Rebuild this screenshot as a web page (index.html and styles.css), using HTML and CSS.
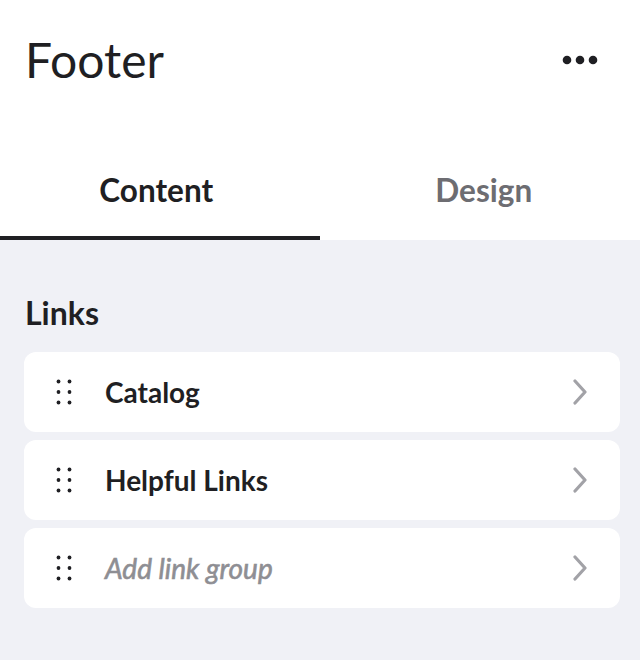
FILE: index.html
```html
<!DOCTYPE html>
<html>
<head>
<meta charset="utf-8">
<link rel="stylesheet" href="styles.css">
</head>
<body>
<div class="panel">
  <div class="header">
    <h1 class="title">Footer</h1>
    <button class="more" aria-label="More">
      <svg width="36" height="10" viewBox="0 0 36 10"><circle cx="5" cy="5" r="4.3" fill="#1f1f23"/><circle cx="18" cy="5" r="4.3" fill="#1f1f23"/><circle cx="31" cy="5" r="4.3" fill="#1f1f23"/></svg>
    </button>
  </div>
  <div class="tabs">
    <div class="tab tab-left active">Content</div>
    <div class="tab tab-right">Design</div>
  </div>
  <div class="content">
    <h2 class="section-title">Links</h2>
    <div class="list">
      <div class="item">
        <svg class="grip" width="16" height="26" viewBox="0 0 16 26"><circle cx="2.5" cy="2.5" r="1.9"/><circle cx="13.5" cy="2.5" r="1.9"/><circle cx="2.5" cy="13" r="1.9"/><circle cx="13.5" cy="13" r="1.9"/><circle cx="2.5" cy="23.5" r="1.9"/><circle cx="13.5" cy="23.5" r="1.9"/></svg>
        <span class="label">Catalog</span>
        <svg class="chev" width="16" height="26" viewBox="0 0 16 26"><path d="M3 2 L13 13 L3 24" fill="none" stroke="#a2a2a7" stroke-width="3.2" stroke-linecap="round" stroke-linejoin="round"/></svg>
      </div>
      <div class="item">
        <svg class="grip" width="16" height="26" viewBox="0 0 16 26"><circle cx="2.5" cy="2.5" r="1.9"/><circle cx="13.5" cy="2.5" r="1.9"/><circle cx="2.5" cy="13" r="1.9"/><circle cx="13.5" cy="13" r="1.9"/><circle cx="2.5" cy="23.5" r="1.9"/><circle cx="13.5" cy="23.5" r="1.9"/></svg>
        <span class="label">Helpful Links</span>
        <svg class="chev" width="16" height="26" viewBox="0 0 16 26"><path d="M3 2 L13 13 L3 24" fill="none" stroke="#a2a2a7" stroke-width="3.2" stroke-linecap="round" stroke-linejoin="round"/></svg>
      </div>
      <div class="item">
        <svg class="grip" width="16" height="26" viewBox="0 0 16 26"><circle cx="2.5" cy="2.5" r="1.9"/><circle cx="13.5" cy="2.5" r="1.9"/><circle cx="2.5" cy="13" r="1.9"/><circle cx="13.5" cy="13" r="1.9"/><circle cx="2.5" cy="23.5" r="1.9"/><circle cx="13.5" cy="23.5" r="1.9"/></svg>
        <span class="label placeholder">Add link group</span>
        <svg class="chev" width="16" height="26" viewBox="0 0 16 26"><path d="M3 2 L13 13 L3 24" fill="none" stroke="#a2a2a7" stroke-width="3.2" stroke-linecap="round" stroke-linejoin="round"/></svg>
      </div>
    </div>
  </div>
</div>
</body>
</html>
```

FILE: styles.css
```css
html, body {
  margin: 0;
  padding: 0;
  background: #f0f1f6;
}
body {
  font-family: Lato, "Noto Sans", sans-serif;
  color: #1f1f23;
}
.panel {
  width: 640px;
  min-height: 660px;
  background: #f0f1f6;
}
.header {
  height: 120px;
  background: #fff;
  display: flex;
  align-items: center;
  justify-content: space-between;
  padding: 0 42px 0 25px;
  box-sizing: border-box;
}
.title {
  margin: 0;
  font-size: 48px;
  font-weight: 400;
  line-height: 1.2;
}
.more {
  border: 0;
  background: none;
  padding: 0;
  display: flex;
}
.tabs {
  display: flex;
  background: #fff;
  padding-top: 20px;
}
.tab {
  flex: 1;
  height: 100px;
  box-sizing: border-box;
  display: flex;
  align-items: center;
  justify-content: center;
  font-size: 31.5px;
  font-weight: 700;
  color: #6d6d72;
  border-bottom: 4px solid transparent;
  padding-top: 3px;
}
.tab-left {
  padding-right: 7px;
}
.tab-right {
  padding-left: 8px;
}
.tab.active {
  color: #1f1f23;
  border-bottom-color: #1f1f23;
}
.content {
  padding: 54px 20px 0 24px;
}
.section-title {
  margin: 0 0 20px 1px;
  font-size: 32px;
  font-weight: 700;
  line-height: 1.2;
}
.list {
  display: flex;
  flex-direction: column;
  gap: 8px;
}
.item {
  height: 80px;
  background: #fff;
  border-radius: 12px;
  display: flex;
  align-items: center;
  padding: 0 32px 0 32px;
  box-sizing: border-box;
}
.grip {
  fill: #1f1f23;
  flex: none;
}
.label {
  flex: 1;
  margin-left: 33px;
  font-size: 28px;
  font-weight: 700;
}
.label.placeholder {
  font-style: italic;
  font-weight: 400;
  color: #8e8e93;
  -webkit-text-stroke: 0.6px #8e8e93;
}
.chev {
  flex: none;
}
```
